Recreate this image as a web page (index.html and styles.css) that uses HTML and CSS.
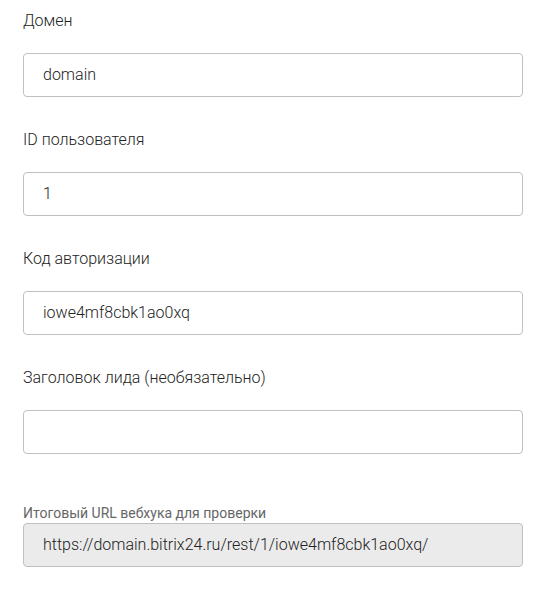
FILE: index.html
```html
<!DOCTYPE html>
<html lang="ru">
<head>
<meta charset="utf-8">
<link rel="stylesheet" href="styles.css">
</head>
<body>
<form class="form">
  <div class="field">
    <label class="label">Домен</label>
    <div class="input">domain</div>
  </div>
  <div class="field">
    <label class="label">ID пользователя</label>
    <div class="input">1</div>
  </div>
  <div class="field">
    <label class="label">Код авторизации</label>
    <div class="input">iowe4mf8cbk1ao0xq</div>
  </div>
  <div class="field">
    <label class="label">Заголовок лида (необязательно)</label>
    <div class="input"></div>
  </div>
  <div class="result">
    <label class="result-label">Итоговый URL вебхука для проверки</label>
    <div class="input input-readonly">https://domain.bitrix24.ru/rest/1/iowe4mf8cbk1ao0xq/</div>
  </div>
</form>
</body>
</html>
```

FILE: styles.css
```css
html, body {
  margin: 0;
  padding: 0;
  background: #ffffff;
}
body {
  font-family: Roboto, "Noto Sans", Arial, sans-serif;
  color: #333333;
}
.form {
  width: 500px;
  padding: 12px 0 0 23px;
  display: flex;
  flex-direction: column;
}
.field {
  display: flex;
  flex-direction: column;
  margin-bottom: 34px;
}
.label {
  display: block;
  font-size: 16px;
  font-weight: 300;
  line-height: 18px;
  margin-bottom: 23px;
  color: #222222;
}
.input {
  box-sizing: border-box;
  height: 44px;
  border: 1px solid #bfbfc6;
  border-radius: 4px;
  padding: 0 19px;
  font-size: 16px;
  font-weight: 300;
  line-height: 42px;
  color: #222222;
  background: #ffffff;
}
.result {
  display: flex;
  flex-direction: column;
  margin-top: 17px;
}
.result-label {
  display: block;
  font-size: 14px;
  font-weight: 400;
  line-height: 17px;
  color: #666666;
  margin-bottom: 1px;
}
.input-readonly {
  background: #ebebeb;
}
```
